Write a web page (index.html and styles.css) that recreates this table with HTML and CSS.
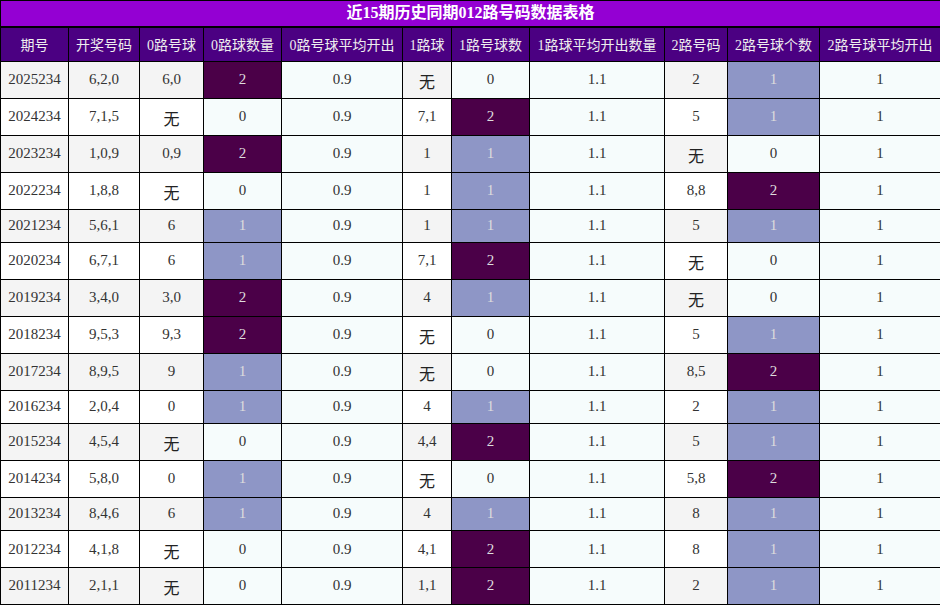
FILE: index.html
```html
<!DOCTYPE html>
<html lang="zh">
<head>
<meta charset="utf-8">
<title>近15期历史同期012路号码数据表格</title>
<link rel="stylesheet" href="styles.css">
</head>
<body>
<table class="data">
  <colgroup>
    <col class="c1"><col class="c2"><col class="c3"><col class="c4"><col class="c5"><col class="c6"><col class="c7"><col class="c8"><col class="c9"><col class="c10"><col class="c11">
  </colgroup>
  <thead>
    <tr class="title"><th colspan="11">近15期历史同期012路号码数据表格</th></tr>
    <tr class="head">
      <th>期号</th><th>开奖号码</th><th>0路号球</th><th>0路球数量</th><th>0路号球平均开出</th><th>1路球</th><th>1路号球数</th><th>1路球平均开出数量</th><th>2路号码</th><th>2路号球个数</th><th>2路号球平均开出</th>
    </tr>
  </thead>
  <tbody>
    <tr class="odd tall"><td>2025234</td><td>6,2,0</td><td>6,0</td><td class="n2">2</td><td class="avg">0.9</td><td><span class="wu">无</span></td><td class="n0">0</td><td class="avg">1.1</td><td>2</td><td class="n1">1</td><td class="avg">1</td></tr>
    <tr class="even tall"><td>2024234</td><td>7,1,5</td><td><span class="wu">无</span></td><td class="n0">0</td><td class="avg">0.9</td><td>7,1</td><td class="n2">2</td><td class="avg">1.1</td><td>5</td><td class="n1">1</td><td class="avg">1</td></tr>
    <tr class="odd tall"><td>2023234</td><td>1,0,9</td><td>0,9</td><td class="n2">2</td><td class="avg">0.9</td><td>1</td><td class="n1">1</td><td class="avg">1.1</td><td><span class="wu">无</span></td><td class="n0">0</td><td class="avg">1</td></tr>
    <tr class="even tall"><td>2022234</td><td>1,8,8</td><td><span class="wu">无</span></td><td class="n0">0</td><td class="avg">0.9</td><td>1</td><td class="n1">1</td><td class="avg">1.1</td><td>8,8</td><td class="n2">2</td><td class="avg">1</td></tr>
    <tr class="odd"><td>2021234</td><td>5,6,1</td><td>6</td><td class="n1">1</td><td class="avg">0.9</td><td>1</td><td class="n1">1</td><td class="avg">1.1</td><td>5</td><td class="n1">1</td><td class="avg">1</td></tr>
    <tr class="even tall"><td>2020234</td><td>6,7,1</td><td>6</td><td class="n1">1</td><td class="avg">0.9</td><td>7,1</td><td class="n2">2</td><td class="avg">1.1</td><td><span class="wu">无</span></td><td class="n0">0</td><td class="avg">1</td></tr>
    <tr class="odd tall"><td>2019234</td><td>3,4,0</td><td>3,0</td><td class="n2">2</td><td class="avg">0.9</td><td>4</td><td class="n1">1</td><td class="avg">1.1</td><td><span class="wu">无</span></td><td class="n0">0</td><td class="avg">1</td></tr>
    <tr class="even tall"><td>2018234</td><td>9,5,3</td><td>9,3</td><td class="n2">2</td><td class="avg">0.9</td><td><span class="wu">无</span></td><td class="n0">0</td><td class="avg">1.1</td><td>5</td><td class="n1">1</td><td class="avg">1</td></tr>
    <tr class="odd tall"><td>2017234</td><td>8,9,5</td><td>9</td><td class="n1">1</td><td class="avg">0.9</td><td><span class="wu">无</span></td><td class="n0">0</td><td class="avg">1.1</td><td>8,5</td><td class="n2">2</td><td class="avg">1</td></tr>
    <tr class="even"><td>2016234</td><td>2,0,4</td><td>0</td><td class="n1">1</td><td class="avg">0.9</td><td>4</td><td class="n1">1</td><td class="avg">1.1</td><td>2</td><td class="n1">1</td><td class="avg">1</td></tr>
    <tr class="odd tall"><td>2015234</td><td>4,5,4</td><td><span class="wu">无</span></td><td class="n0">0</td><td class="avg">0.9</td><td>4,4</td><td class="n2">2</td><td class="avg">1.1</td><td>5</td><td class="n1">1</td><td class="avg">1</td></tr>
    <tr class="even tall"><td>2014234</td><td>5,8,0</td><td>0</td><td class="n1">1</td><td class="avg">0.9</td><td><span class="wu">无</span></td><td class="n0">0</td><td class="avg">1.1</td><td>5,8</td><td class="n2">2</td><td class="avg">1</td></tr>
    <tr class="odd"><td>2013234</td><td>8,4,6</td><td>6</td><td class="n1">1</td><td class="avg">0.9</td><td>4</td><td class="n1">1</td><td class="avg">1.1</td><td>8</td><td class="n1">1</td><td class="avg">1</td></tr>
    <tr class="even tall"><td>2012234</td><td>4,1,8</td><td><span class="wu">无</span></td><td class="n0">0</td><td class="avg">0.9</td><td>4,1</td><td class="n2">2</td><td class="avg">1.1</td><td>8</td><td class="n1">1</td><td class="avg">1</td></tr>
    <tr class="odd tall"><td>2011234</td><td>2,1,1</td><td><span class="wu">无</span></td><td class="n0">0</td><td class="avg">0.9</td><td>1,1</td><td class="n2">2</td><td class="avg">1.1</td><td>2</td><td class="n1">1</td><td class="avg">1</td></tr>
  </tbody>
</table>
</body>
</html>
```
FILE: styles.css
```css
html, body {
  margin: 0;
  padding: 0;
  background: #ffffff;
}

.data {
  width: 940px;
  table-layout: fixed;
  border-collapse: collapse;
  border: 1px solid #000;
  font-family: "Liberation Serif", "Noto Sans CJK SC", serif;
  font-size: 15px;
  color: #333;
  text-align: center;
}

.c1 { width: 68px; }
.c2 { width: 71px; }
.c3 { width: 64px; }
.c4 { width: 78px; }
.c5 { width: 121px; }
.c6 { width: 49px; }
.c7 { width: 78px; }
.c8 { width: 135px; }
.c9 { width: 63px; }
.c10 { width: 92px; }
.c11 { width: 121px; }

.data th,
.data td {
  border: 1px solid #000;
  padding: 0;
  box-sizing: border-box;
  white-space: nowrap;
  overflow: hidden;
}

.title th {
  height: 26px;
  background: #9400d3;
  color: #fff;
  font-size: 16px;
  font-weight: bold;
  border-bottom: 2px solid #000;
  line-height: 22px;
}

.head th {
  height: 35px;
  background: #4b0082;
  color: #eee;
  font-weight: normal;
  font-size: 14px;
}

tbody tr td { height: 33.4px; }
tbody tr.tall td { height: 36.9px; }

tr.odd td { background: #f4f4f4; }
tr.even td { background: #ffffff; }

.data td.avg,
.data td.n0 { background: #f6fcfc; }
.data td.n1 { background: #8e96c6; color: #ddd; }
.data td.n2 { background: #4b0048; color: #ddd; }

.wu {
  font-family: "Noto Sans CJK SC", sans-serif;
  font-size: 16px;
  line-height: 20px;
  color: #222;
  position: relative;
  top: 2px;
}
```
